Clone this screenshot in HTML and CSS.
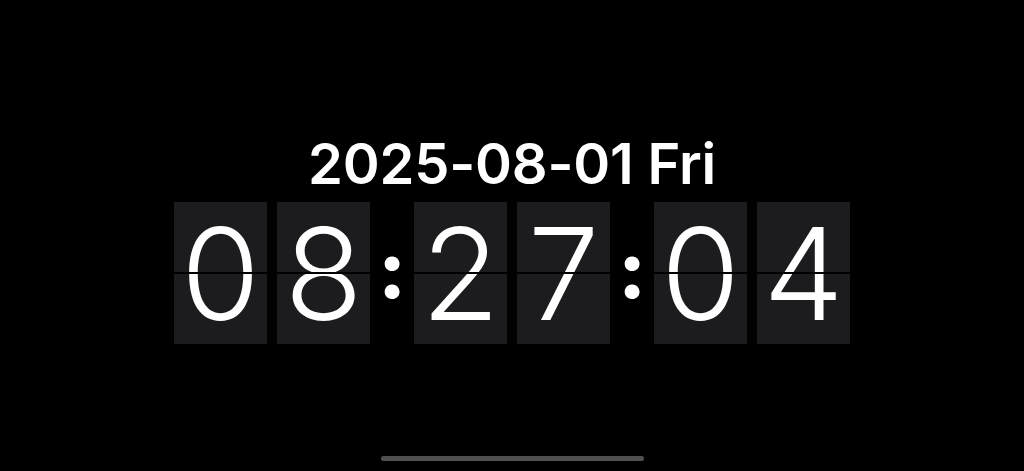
FILE: index.html
```html
<!DOCTYPE html>
<html lang="en">
<head>
<meta charset="utf-8">
<title>Flip Clock</title>
<link rel="stylesheet" href="styles.css">
</head>
<body>
<main class="screen">
  <div class="clock">
    <div class="date">2025-08-01 Fri</div>
    <div class="time">
      <div class="pair">
        <div class="card"><span>0</span></div>
        <div class="card"><span>8</span></div>
      </div>
      <div class="colon">:</div>
      <div class="pair">
        <div class="card"><span>2</span></div>
        <div class="card"><span>7</span></div>
      </div>
      <div class="colon">:</div>
      <div class="pair">
        <div class="card"><span>0</span></div>
        <div class="card"><span>4</span></div>
      </div>
    </div>
  </div>
  <div class="home-indicator"></div>
</main>
</body>
</html>
```

FILE: styles.css
```css
html, body {
  margin: 0;
  padding: 0;
  background: #000;
}

.screen {
  width: 1024px;
  height: 471px;
  display: flex;
  flex-direction: column;
  align-items: center;
  box-sizing: border-box;
  padding-top: 136px;
  font-family: Inter, "Liberation Sans", sans-serif;
  color: #fff;
}

.clock {
  display: flex;
  flex-direction: column;
  align-items: center;
  gap: 10px;
}

.date {
  font-size: 56px;
  font-weight: 600;
  line-height: 56px;
  letter-spacing: -0.2px;
}

.time {
  display: flex;
  align-items: center;
}

.pair {
  display: flex;
  gap: 10px;
}

.card {
  position: relative;
  width: 93px;
  height: 142px;
  background: #1c1c1e;
  display: flex;
  align-items: center;
  justify-content: center;
  font-size: 128px;
  font-weight: 300;
  line-height: 1;
}

.card span {
  display: block;
  margin-top: 1px;
}

.card::after {
  content: "";
  position: absolute;
  left: 0;
  right: 0;
  top: 70px;
  height: 2px;
  background: #000;
}

.colon {
  width: 44px;
  text-align: center;
  font-size: 80px;
  font-weight: 800;
  line-height: 1;
  margin-top: -8px;
}

.home-indicator {
  margin-top: auto;
  margin-bottom: 10px;
  width: 263px;
  height: 5px;
  border-radius: 3px;
  background: #505050;
}
```
